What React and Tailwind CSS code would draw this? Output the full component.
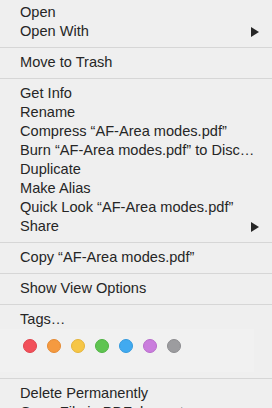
import React from 'react';

const Item = ({ label, submenu }) => (
    <div className="h-[19px] flex items-center justify-between pl-[20px] pr-[13px]">
        <span className="whitespace-nowrap">{label}</span>
        {submenu && (
            <svg width="8" height="10" viewBox="0 0 8 10" className="shrink-0">
                <path d="M0 0 L8 5 L0 10 Z" fill="#262626" />
            </svg>
        )}
    </div>
);

const Separator = () => (
    <div className="h-[12px] flex items-center">
        <div className="h-px w-full bg-[#d6d6d6]" />
    </div>
);

const tagColors = [
    'bg-[#f2505a] border-[#e0434d]',
    'bg-[#f59a40] border-[#e58a33]',
    'bg-[#f6c646] border-[#e5b43a]',
    'bg-[#5fc451] border-[#4fb343]',
    'bg-[#41aaf0] border-[#349ade]',
    'bg-[#ca7ddd] border-[#b86ccb]',
    'bg-[#9c9c9f] border-[#8c8c8f]',
];

export default function App() {
    return (
        <div className="w-[272px] h-[408px] overflow-hidden bg-[#efefef] text-[#262626] text-[14.6px] leading-[19px] font-['Liberation_Sans',Arial,sans-serif] pt-[3px]">
            <Item label="Open" />
            <Item label="Open With" submenu />
            <Separator />
            <Item label="Move to Trash" />
            <Separator />
            <Item label="Get Info" />
            <Item label="Rename" />
            <Item label="Compress “AF-Area modes.pdf”" />
            <Item label="Burn “AF-Area modes.pdf” to Disc…" />
            <Item label="Duplicate" />
            <Item label="Make Alias" />
            <Item label="Quick Look “AF-Area modes.pdf”" />
            <Item label="Share" submenu />
            <Separator />
            <Item label="Copy “AF-Area modes.pdf”" />
            <Separator />
            <Item label="Show View Options" />
            <Separator />
            <Item label="Tags…" />
            <div className="h-[43px] mr-[18px] bg-[#f1f1f1] flex items-start pt-[10px] pl-[23px] gap-[10px]">
                {tagColors.map((c, i) => (
                    <span key={i} className={`w-[14px] h-[14px] rounded-full border ${c}`} />
                ))}
            </div>
            <Separator />
            <Item label="Delete Permanently" />
            <Item label="Open File in PDFelement" />
        </div>
    );
}
